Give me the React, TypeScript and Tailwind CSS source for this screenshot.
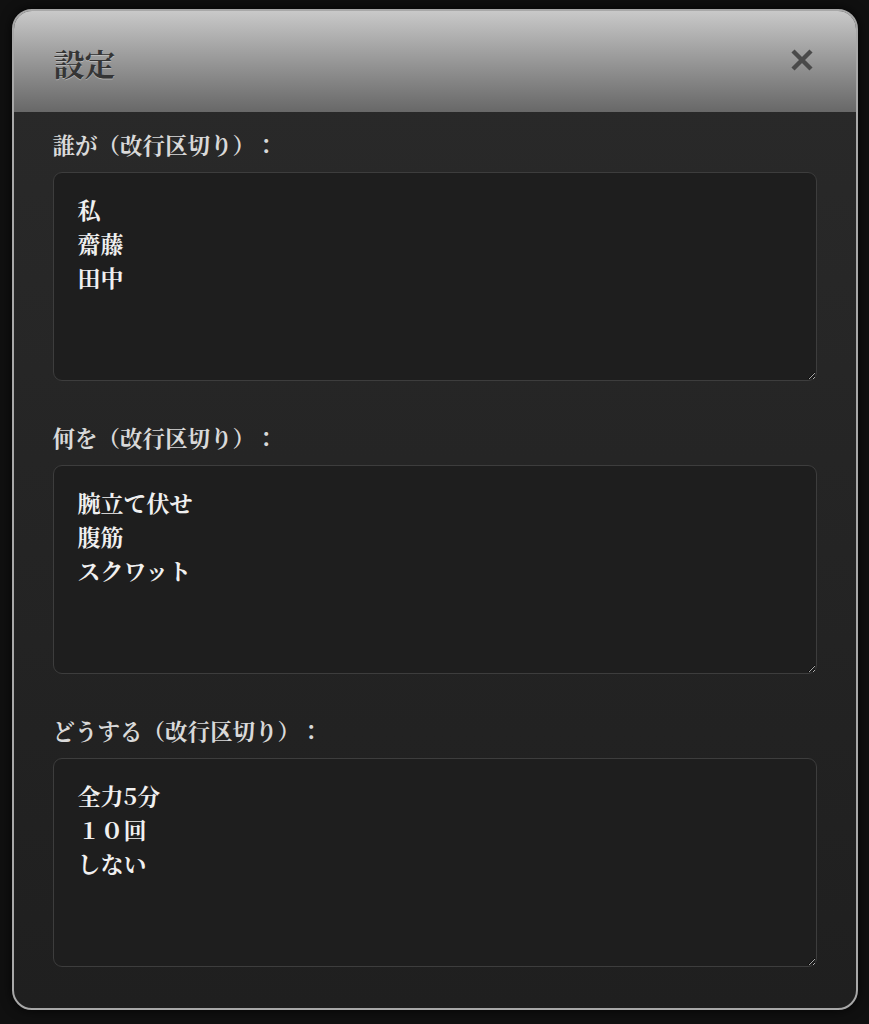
import React from "react";

const FONT = '"Noto Serif CJK JP", "Noto Sans CJK JP", serif';

function Field({ label, value }: { label: string; value: string }) {
  return (
    <div className="flex flex-col">
      <label className="text-[22.5px] leading-[28px] font-bold text-[#d9d9d9] [text-spacing-trim:space-all]">{label}</label>
      <textarea
        defaultValue={value}
        spellCheck={false}
        className="mt-[14px] h-[209px] w-full rounded-[9px] border-[1.5px] border-[#3d3d3d] bg-[#1e1e1e] px-[24px] pt-[20px] pb-[20px] text-[23px] leading-[34px] font-bold text-[#f0f0f0] outline-none [text-spacing-trim:space-all]"
        style={{ fontFamily: FONT }}
      />
    </div>
  );
}

export default function App() {
  return (
    <div
      className="min-h-[1024px] w-full bg-[#101010] pt-[9px]"
      style={{ fontFamily: FONT }}
    >
      <div className="mx-auto w-[846px] h-[1001px] overflow-hidden rounded-[20px] border-2 border-[#a8a8a8] bg-gradient-to-b from-[#2a2a2a] to-[#1f1f1f] shadow-[0_0_12px_rgba(0,0,0,0.8)] flex flex-col">
        <div className="h-[101px] shrink-0 bg-gradient-to-b from-[#c9c9c9] to-[#686868] flex items-center justify-between pl-[40px] pr-[42px] pt-[4px]">
          <h1 className="text-[31px] font-bold text-[#353535] [text-shadow:0_1px_0_rgba(255,255,255,0.35)]">
            設定
          </h1>
          <svg width="24" height="24" viewBox="0 0 24 24" className="mt-[-8px]">
            <path d="M3 3 L21 21 M21 3 L3 21" stroke="#4a4a4a" strokeWidth="4.4" strokeLinecap="butt" />
          </svg>
        </div>
        <div className="flex flex-col gap-[42px] px-[39px] pt-[18px]">
          <Field label="誰が（改行区切り）：" value={"私\n齋藤\n田中"} />
          <Field label="何を（改行区切り）：" value={"腕立て伏せ\n腹筋\nスクワット"} />
          <Field label="どうする（改行区切り）：" value={"全力5分\n１０回\nしない"} />
        </div>
      </div>
    </div>
  );
}
